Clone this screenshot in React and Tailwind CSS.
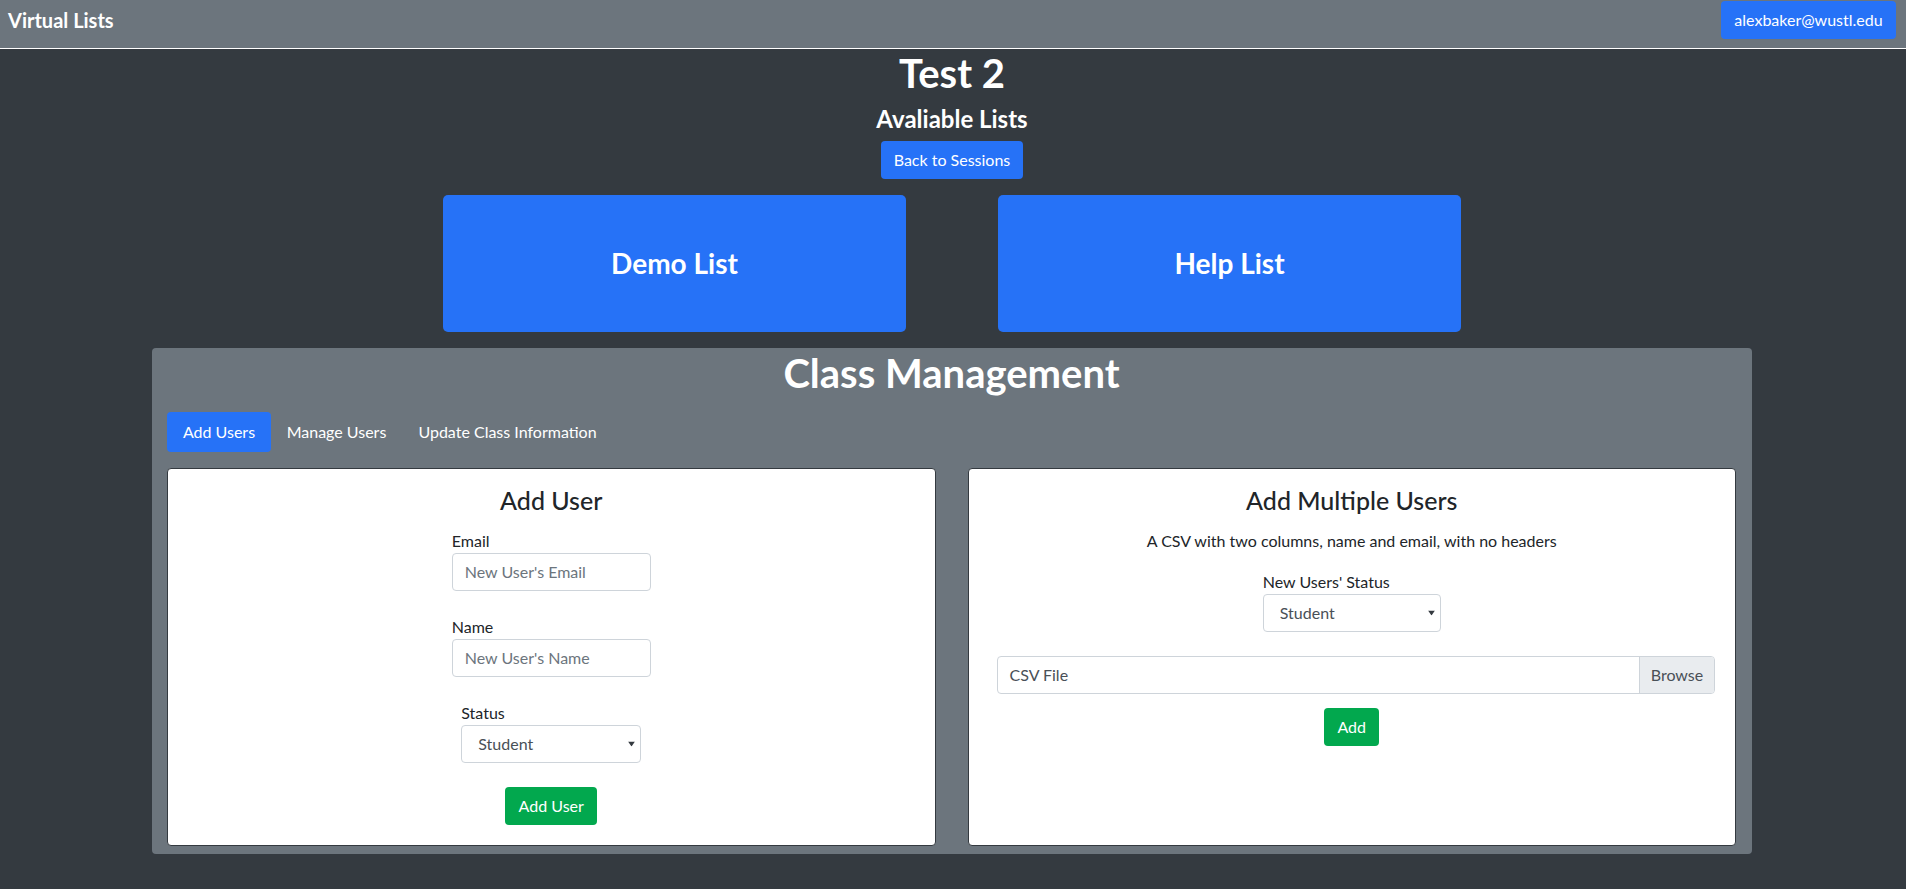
import React from 'react';

function StatusSelect({ className }) {
  return (
    <div className={className}>
      <div className="relative">
        <select
          defaultValue="Student"
          className="h-[38px] w-full appearance-none rounded border border-[#ced4da] bg-white pl-4 pr-6 text-base text-[#495057] outline-none"
        >
          <option>Student</option>
          <option>TA</option>
          <option>Instructor</option>
        </select>
        <svg
          className="pointer-events-none absolute right-[6px] top-1/2 -translate-y-1/2"
          width="7"
          height="5"
          viewBox="0 0 7 5"
        >
          <path d="M0 0h7L3.5 5z" fill="#343a40" />
        </svg>
      </div>
    </div>
  );
}

function TextField({ label, placeholder }) {
  return (
    <div className="w-[199px]">
      <label className="block text-base leading-6 text-[#212529]">{label}</label>
      <input
        placeholder={placeholder}
        className="h-[38px] w-full rounded border border-[#ced4da] bg-white px-3 text-base text-[#495057] outline-none placeholder:text-[#6c757d]"
      />
    </div>
  );
}

function AddUserCard() {
  return (
    <div className="flex flex-col items-center rounded border border-[#343a40] bg-white pt-4 pb-5">
      <h3 className="text-[25px] leading-[30px] font-medium text-[#212529]">Add User</h3>
      <div className="mt-[14px]">
        <TextField label="Email" placeholder="New User's Email" />
      </div>
      <div className="mt-6">
        <TextField label="Name" placeholder="New User's Name" />
      </div>
      <div className="mt-6 w-[180px]">
        <label className="block text-base leading-6 text-[#212529]">Status</label>
        <StatusSelect className="w-full" />
      </div>
      <button className="mt-6 h-[38px] w-[92px] rounded bg-[#02a84e] text-base text-white">Add User</button>
    </div>
  );
}

function AddMultipleCard() {
  return (
    <div className="flex flex-col items-center rounded border border-[#343a40] bg-white pt-4 pb-5">
      <h3 className="text-[25px] leading-[30px] font-medium text-[#212529]">Add Multiple Users</h3>
      <p className="mt-[14px] text-base leading-6 text-[#212529]">
        A CSV with two columns, name and email, with no headers
      </p>
      <div className="mt-[17px] w-[178px]">
        <label className="block text-base leading-6 text-[#212529]">New Users' Status</label>
        <StatusSelect className="w-full" />
      </div>
      <div className="mt-6 ml-[28px] mr-[20px] flex h-[38px] self-stretch overflow-hidden rounded border border-[#ced4da]">
        <div className="flex flex-1 items-center px-3 text-base text-[#495057]">CSV File</div>
        <div className="flex w-[75px] items-center justify-center border-l border-[#ced4da] bg-[#e9ecef] text-base text-[#495057]">
          Browse
        </div>
      </div>
      <button className="mt-[14px] h-[38px] w-[55px] rounded bg-[#02a84e] text-base text-white">Add</button>
    </div>
  );
}

export default function App() {
  return (
    <div className="min-h-screen bg-[#343a40] font-[Lato,sans-serif] text-white">
      <nav className="h-[49px] border-b border-white bg-[#6c757d]">
        <div className="flex h-10 items-center justify-between pl-2 pr-[10px]">
          <span className="text-xl leading-[30px] font-bold">Virtual Lists</span>
          <button className="h-[38px] w-[175px] rounded bg-[#2672f7] text-base text-white">alexbaker@wustl.edu</button>
        </div>
      </nav>

      <main className="pr-[2px]">
        <div className="flex flex-col items-center">
          <h1 className="text-[40px] leading-[48px] font-bold">Test 2</h1>
          <h4 className="mt-2 text-2xl leading-[28.8px] font-bold">Avaliable Lists</h4>
          <button className="mt-[7px] h-[38px] w-[142px] rounded bg-[#2672f7] text-base text-white">Back to Sessions</button>
        </div>

        <div className="mt-4 flex justify-center gap-[92px]">
          <div className="flex h-[137px] w-[463px] items-center justify-center rounded-[5px] bg-[#2672f7] text-[28px] font-bold">
            Demo List
          </div>
          <div className="flex h-[137px] w-[463px] items-center justify-center rounded-[5px] bg-[#2672f7] text-[28px] font-bold">
            Help List
          </div>
        </div>

        <div className="mx-auto mt-4 w-[1600px] rounded bg-[#6c757d] pt-px pr-4 pb-2 pl-[15px]">
          <h1 className="text-center text-[40px] leading-[48px] font-bold">Class Management</h1>
          <div className="mt-[15px] flex">
            <button className="h-10 w-[104px] rounded bg-[#2672f7] text-base text-white">Add Users</button>
            <button className="h-10 w-[131px] rounded text-base text-white">Manage Users</button>
            <button className="h-10 w-[211px] rounded text-base text-white">Update Class Information</button>
          </div>
          <div className="mt-4 grid grid-cols-2 gap-8">
            <AddUserCard />
            <AddMultipleCard />
          </div>
        </div>
      </main>
    </div>
  );
}
